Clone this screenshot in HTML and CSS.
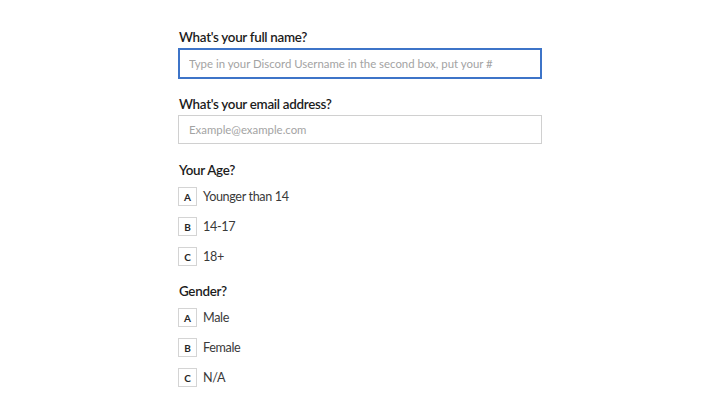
FILE: index.html
```html
<!DOCTYPE html>
<html lang="en">
<head>
<meta charset="utf-8">
<title>Form</title>
<link rel="stylesheet" href="styles.css">
</head>
<body>
<main class="form">
  <section class="field">
    <label class="label" for="name">What's your full name?</label>
    <input id="name" class="input input--focus" type="text" placeholder="Type in your Discord Username in the second box, put your #">
  </section>
  <section class="field">
    <label class="label" for="email">What's your email address?</label>
    <input id="email" class="input" type="text" placeholder="Example@example.com">
  </section>
  <section class="group">
    <div class="label">Your Age?</div>
    <ul class="options">
      <li class="option"><span class="key">A</span><span class="text">Younger than 14</span></li>
      <li class="option"><span class="key">B</span><span class="text">14-17</span></li>
      <li class="option"><span class="key">C</span><span class="text">18+</span></li>
    </ul>
  </section>
  <section class="group">
    <div class="label">Gender?</div>
    <ul class="options">
      <li class="option"><span class="key">A</span><span class="text">Male</span></li>
      <li class="option"><span class="key">B</span><span class="text">Female</span></li>
      <li class="option"><span class="key">C</span><span class="text">N/A</span></li>
    </ul>
  </section>
</main>
</body>
</html>
```
FILE: styles.css
```css
* { box-sizing: border-box; }
html, body { margin: 0; padding: 0; background: #ffffff; }
body {
  font-family: "Lato", "Liberation Sans", sans-serif;
  color: #161616;
  overflow: hidden;
}
.form {
  width: 364px;
  margin: 0 0 0 178px;
  padding-top: 28px;
  display: flex;
  flex-direction: column;
}
.label {
  display: block;
  font-size: 13.4px;
  font-weight: 600;
  line-height: 18px;
  letter-spacing: -0.3px;
  color: #1c1c1c;
  padding-left: 1px;
}
.field { display: flex; flex-direction: column; }
.field .label { margin-bottom: 2px; }
.input {
  width: 364px;
  height: 29px;
  border: 1px solid #d0d0d0;
  padding: 0 10px;
  font-family: inherit;
  font-size: 11.4px;
  letter-spacing: 0px;
  color: #161616;
  outline: none;
  background: #fff;
  margin: 0;
}
.input::placeholder { color: #a3a3a3; }
.input--focus { border: 2px solid #3d74c8; padding-left: 9px; height: 31px; }
.field + .field { margin-top: 16px; }
.field + .group { margin-top: 17px; }
.group + .group { margin-top: 16px; }
.options {
  list-style: none;
  margin: 8px 0 0;
  padding: 0;
  display: flex;
  flex-direction: column;
  gap: 11px;
}
.option {
  display: flex;
  align-items: center;
  gap: 6px;
  height: 19px;
}
.key {
  width: 19px;
  height: 19px;
  border: 1px solid #d4d4d4;
  display: flex;
  align-items: center;
  justify-content: center;
  font-size: 10px;
  font-weight: 700;
  color: #262626;
}
.text {
  font-size: 12.6px;
  letter-spacing: -0.35px;
  color: #3a3a3a;
}
```
